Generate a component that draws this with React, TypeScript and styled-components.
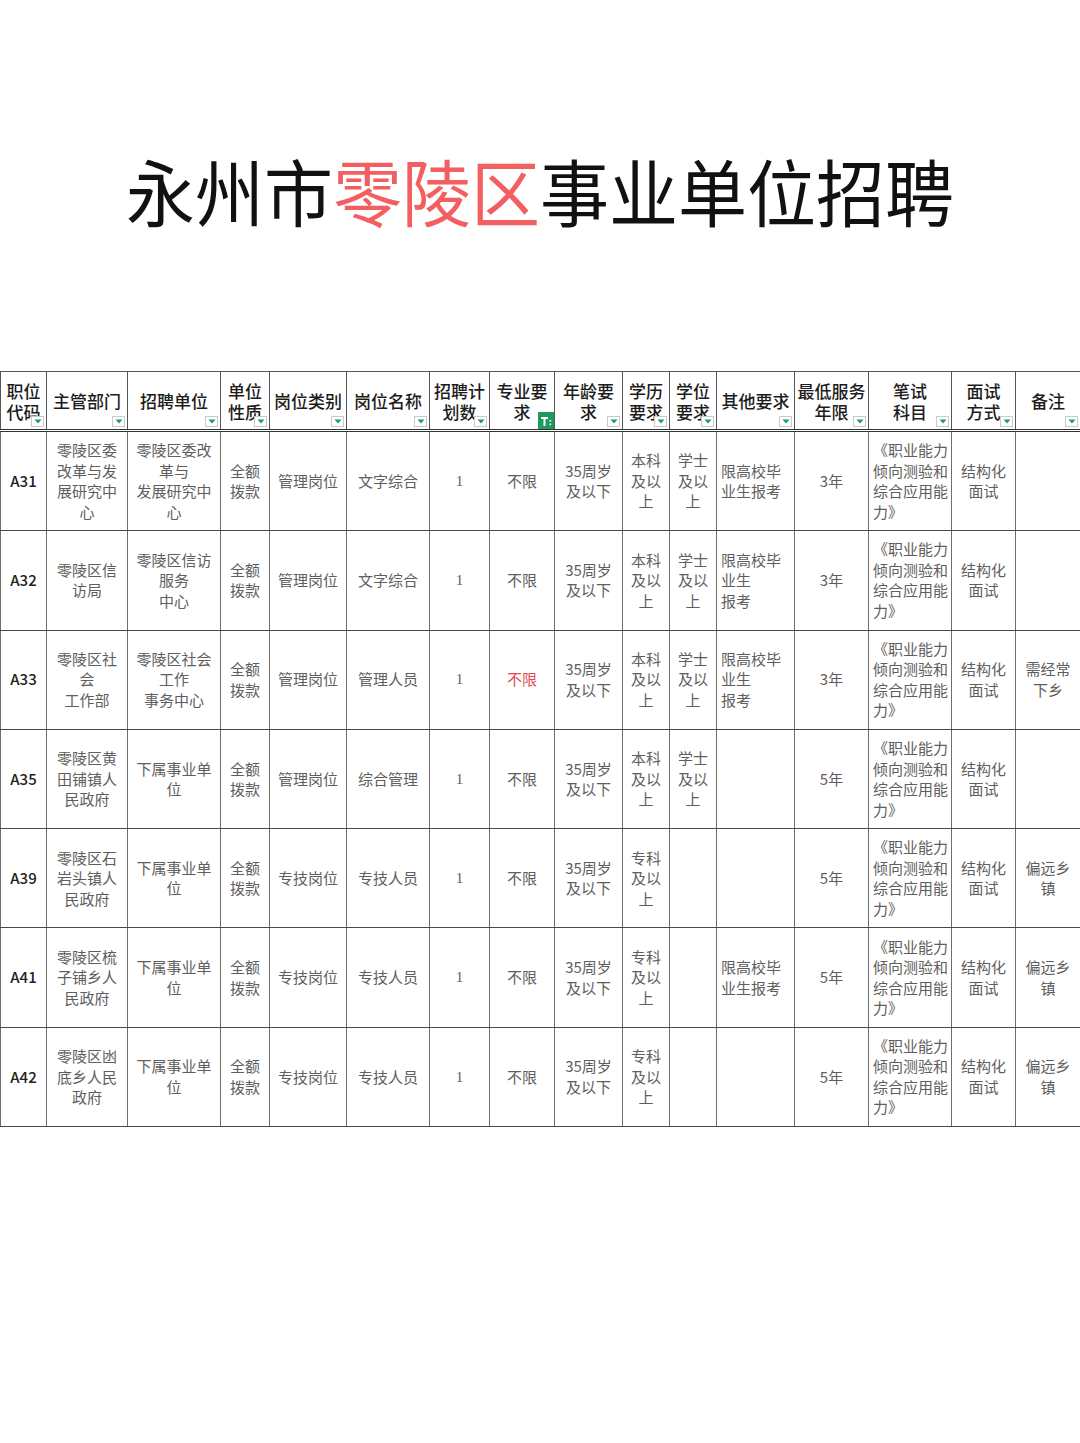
import React from 'react';
import styled, {createGlobalStyle} from 'styled-components';

const GlobalStyle = createGlobalStyle`
  html, body {
    margin: 0;
    padding: 0;
    background: #ffffff;
  }
  body {
    font-family: "Noto Sans CJK SC", "Noto Sans", sans-serif;
  }
`;

interface ColumnProps {
  title: string;
  width: number;
  filtered?: boolean;
}

const columns: ColumnProps[] = [
  {title: '职位\n代码', width: 46},
  {title: '主管部门', width: 81},
  {title: '招聘单位', width: 93},
  {title: '单位\n性质', width: 49},
  {title: '岗位类别', width: 77},
  {title: '岗位名称', width: 83},
  {title: '招聘计\n划数', width: 60},
  {title: '专业要\n求', width: 65, filtered: true},
  {title: '年龄要\n求', width: 68},
  {title: '学历\n要求', width: 47},
  {title: '学位\n要求', width: 47},
  {title: '其他要求', width: 78},
  {title: '最低服务\n年限', width: 74},
  {title: '笔试\n科目', width: 83},
  {title: '面试\n方式', width: 64},
  {title: '备注', width: 65},
];

const exam = '《职业能力\n倾向测验和\n综合应用能\n力》';

const rows: string[][] = [
  ['A31', '零陵区委\n改革与发\n展研究中\n心', '零陵区委改\n革与\n发展研究中\n心', '全额\n拨款', '管理岗位', '文字综合', '1', '不限', '35周岁\n及以下', '本科\n及以\n上', '学士\n及以\n上', '限高校毕\n业生报考', '3年', exam, '结构化\n面试', ''],
  ['A32', '零陵区信\n访局', '零陵区信访\n服务\n中心', '全额\n拨款', '管理岗位', '文字综合', '1', '不限', '35周岁\n及以下', '本科\n及以\n上', '学士\n及以\n上', '限高校毕\n业生\n报考', '3年', exam, '结构化\n面试', ''],
  ['A33', '零陵区社\n会\n工作部', '零陵区社会\n工作\n事务中心', '全额\n拨款', '管理岗位', '管理人员', '1', '不限', '35周岁\n及以下', '本科\n及以\n上', '学士\n及以\n上', '限高校毕\n业生\n报考', '3年', exam, '结构化\n面试', '需经常\n下乡'],
  ['A35', '零陵区黄\n田铺镇人\n民政府', '下属事业单\n位', '全额\n拨款', '管理岗位', '综合管理', '1', '不限', '35周岁\n及以下', '本科\n及以\n上', '学士\n及以\n上', '', '5年', exam, '结构化\n面试', ''],
  ['A39', '零陵区石\n岩头镇人\n民政府', '下属事业单\n位', '全额\n拨款', '专技岗位', '专技人员', '1', '不限', '35周岁\n及以下', '专科\n及以\n上', '', '', '5年', exam, '结构化\n面试', '偏远乡\n镇'],
  ['A41', '零陵区梳\n子铺乡人\n民政府', '下属事业单\n位', '全额\n拨款', '专技岗位', '专技人员', '1', '不限', '35周岁\n及以下', '专科\n及以\n上', '', '限高校毕\n业生报考', '5年', exam, '结构化\n面试', '偏远乡\n镇'],
  ['A42', '零陵区凼\n底乡人民\n政府', '下属事业单\n位', '全额\n拨款', '专技岗位', '专技人员', '1', '不限', '35周岁\n及以下', '专科\n及以\n上', '', '', '5年', exam, '结构化\n面试', '偏远乡\n镇'],
];

// 第三行专业要求被标红
const redCells: Record<string, boolean> = {'2-7': true};

type CellKind = 'code' | 'center' | 'left' | 'serif';

const kindOf = (col: number): CellKind => {
  if (col === 0) return 'code';
  if (col === 6) return 'serif';
  if (col === 11 || col === 13) return 'left';
  return 'center';
};

export default function App() {
  return (
    <>
      <GlobalStyle />
      <Page>
        <Title>
          永州市<TitleRed>零陵区</TitleRed>事业单位招聘
        </Title>
        <Table>
          <colgroup>
            {columns.map((c) => (
              <col key={c.title} style={{width: c.width}} />
            ))}
          </colgroup>
          <thead>
            <tr>
              {columns.map((c) => (
                <HeadCell key={c.title}>
                  <HeadText>{c.title}</HeadText>
                  {c.filtered ? (
                    <FilterOn>
                      <svg width="16" height="16" viewBox="0 0 16 16">
                        <path d="M3 4h7v2H7.5v7h-2V6H3z" fill="#ffffff" />
                        <rect x="11.5" y="7" width="1.6" height="1.6" fill="#ffffff" />
                        <rect x="11.5" y="10.5" width="1.6" height="1.6" fill="#ffffff" />
                      </svg>
                    </FilterOn>
                  ) : (
                    <Dropdown>
                      <svg width="8" height="5" viewBox="0 0 8 5">
                        <path d="M0.5 0.5h7L4 4.5z" fill="#1a9c6c" />
                      </svg>
                    </Dropdown>
                  )}
                </HeadCell>
              ))}
            </tr>
          </thead>
          <tbody>
            {rows.map((row, r) => (
              <tr key={row[0]}>
                {row.map((text, c) => (
                  <Cell key={c} $kind={kindOf(c)} $red={!!redCells[`${r}-${c}`]}>
                    {text}
                  </Cell>
                ))}
              </tr>
            ))}
          </tbody>
        </Table>
      </Page>
    </>
  );
}

const Page = styled.div`
  width: 1080px;
  min-height: 1443px;
  background: #ffffff;
  padding-top: 146px;
  box-sizing: border-box;
`;

const Title = styled.div`
  margin: 0;
  height: 86px;
  line-height: 86px;
  text-align: center;
  font-size: 69px;
  font-weight: 400;
  color: #111111;
  white-space: nowrap;
  font-family: "Noto Sans CJK SC", sans-serif;
  transform: scaleY(1.06);
`;

const TitleRed = styled.span`
  color: #f35f61;
`;

const Table = styled.table`
  margin-top: 139px;
  width: 1080px;
  table-layout: fixed;
  border-collapse: collapse;
  border: 1.5px solid #3a3a3a;
`;

const HeadCell = styled.th`
  position: relative;
  height: 57px;
  padding: 0;
  border: 1.5px solid #555555;
  border-bottom: 3px double #333333;
  text-align: center;
  vertical-align: middle;
  font-weight: 500;
  font-size: 17px;
  color: #1c1c1c;
  overflow: hidden;
`;

const HeadText = styled.div`
  white-space: pre-line;
  line-height: 21px;
`;

const Dropdown = styled.span`
  position: absolute;
  right: 2px;
  bottom: 2px;
  width: 13px;
  height: 11px;
  box-sizing: border-box;
  border: 1px solid #c9c9c9;
  background: #ffffff;
  display: flex;
  align-items: center;
  justify-content: center;
`;

const FilterOn = styled.span`
  position: absolute;
  right: 0;
  bottom: 0;
  width: 16px;
  height: 17px;
  background: #1f9a5e;
  display: flex;
  align-items: center;
  justify-content: center;
`;

const Cell = styled.td<{$kind: CellKind; $red: boolean}>`
  height: 98.3px;
  padding: 0 2px 0 ${(p) => (p.$kind === 'left' ? '4px' : '2px')};
  border: 1.5px solid #4a4a4a;
  border-left-color: #6e6e6e;
  border-right-color: #6e6e6e;
  white-space: pre-line;
  vertical-align: middle;
  text-align: ${(p) => (p.$kind === 'left' ? 'left' : 'center')};
  line-height: 20.5px;
  font-size: 15px;
  font-weight: ${(p) => (p.$kind === 'code' ? 500 : 400)};
  font-family: ${(p) =>
    p.$kind === 'serif'
      ? '"Liberation Serif", serif'
      : '"Noto Sans CJK SC", sans-serif'};
  color: ${(p) => (p.$red ? '#e34a4f' : p.$kind === 'code' ? '#222222' : '#5e5e5e')};
  overflow: hidden;
`;
